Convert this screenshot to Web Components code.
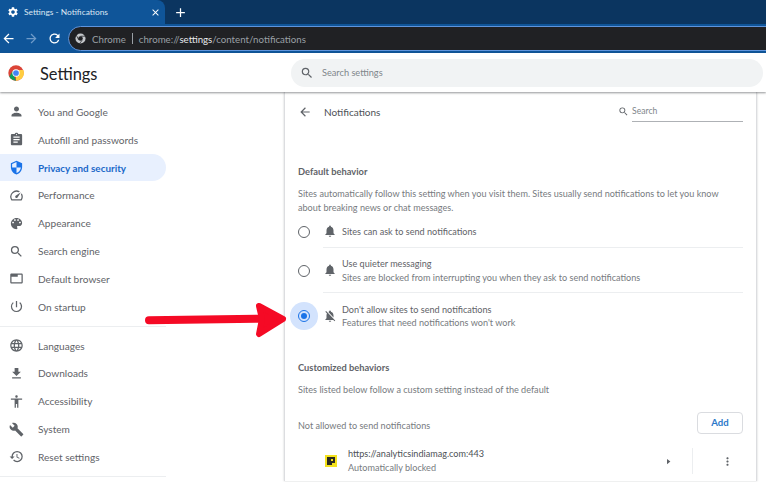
<!DOCTYPE html>
<html>
<head>
<meta charset="utf-8">
<title>Settings - Notifications</title>
<style>
  html, body { margin: 0; padding: 0; background: #fff; }
  body { width: 766px; height: 482px; overflow: hidden; position: relative; font-family: Lato, "Noto Sans", sans-serif; }
  .page { display: flex; height: 389px; }
</style>
</head>
<body>
<tab-strip></tab-strip>
<tool-bar></tool-bar>
<settings-header></settings-header>
<div class="page">
  <settings-nav>
    <nav-item icon="person">You and Google</nav-item>
    <nav-item icon="assignment">Autofill and passwords</nav-item>
    <nav-item icon="security" selected>Privacy and security</nav-item>
    <nav-item icon="speed">Performance</nav-item>
    <nav-item icon="palette">Appearance</nav-item>
    <nav-item icon="search">Search engine</nav-item>
    <nav-item icon="browser">Default browser</nav-item>
    <nav-item icon="power">On startup</nav-item>
    <nav-rule></nav-rule>
    <nav-item icon="language">Languages</nav-item>
    <nav-item icon="download">Downloads</nav-item>
    <nav-item icon="accessibility">Accessibility</nav-item>
    <nav-item icon="build">System</nav-item>
    <nav-item icon="restore">Reset settings</nav-item>
    <nav-rule></nav-rule>
  </settings-nav>
  <settings-panel></settings-panel>
</div>
<red-arrow></red-arrow>

<script>
//icon paths, all on a 24 box
const ICONS = {
  person: "M12 12c2.21 0 4-1.79 4-4s-1.79-4-4-4-4 1.79-4 4 1.79 4 4 4zm0 2c-2.67 0-8 1.34-8 4v2h16v-2c0-2.66-5.33-4-8-4z",
  assignment: "M19 3h-4.18C14.4 1.84 13.3 1 12 1c-1.3 0-2.4.84-2.82 2H5c-1.1 0-2 .9-2 2v14c0 1.1.9 2 2 2h14c1.1 0 2-.9 2-2V5c0-1.1-.9-2-2-2zm-7 0c.55 0 1 .45 1 1s-.45 1-1 1-1-.45-1-1 .45-1 1-1zm2 14H7v-2h7v2zm3-4H7v-2h10v2zm0-4H7V7h10v2z",
  security: "M12 1L3 5v6c0 5.55 3.84 10.74 9 12 5.16-1.26 9-6.45 9-12V5l-9-4zm0 10.99h7c-.53 4.12-3.28 7.79-7 8.94V12H5V6.3l7-3.11v8.8z",
  speed: "M20.38 8.57l-1.23 1.85a8 8 0 0 1-.22 7.58H5.07A8 8 0 0 1 15.58 6.85l1.85-1.23A10 10 0 0 0 3.35 19a2 2 0 0 0 1.72 1h13.85a2 2 0 0 0 1.74-1 10 10 0 0 0-.27-10.44zm-9.79 6.84a2 2 0 0 0 2.83 0l5.66-8.49-8.49 5.66a2 2 0 0 0 0 2.83z",
  palette: "M12 3c-4.97 0-9 4.03-9 9s4.03 9 9 9c.83 0 1.5-.67 1.5-1.5 0-.39-.15-.74-.39-1.01-.23-.26-.38-.61-.38-.99 0-.83.67-1.5 1.5-1.5H16c2.76 0 5-2.24 5-5 0-4.42-4.03-8-9-8zm-5.5 9c-.83 0-1.5-.67-1.5-1.5S5.67 9 6.5 9 8 9.67 8 10.5 7.33 12 6.5 12zm3-4C8.67 8 8 7.33 8 6.5S8.67 5 9.5 5s1.5.67 1.5 1.5S10.33 8 9.5 8zm5 0c-.83 0-1.5-.67-1.5-1.5S13.67 5 14.5 5s1.5.67 1.5 1.5S15.33 8 14.5 8zm3 4c-.83 0-1.5-.67-1.5-1.5S16.67 9 17.5 9s1.5.67 1.5 1.5-.67 1.5-1.5 1.5z",
  search: "M15.5 14h-.79l-.28-.27A6.471 6.471 0 0 0 16 9.5 6.5 6.5 0 1 0 9.5 16c1.61 0 3.09-.59 4.23-1.57l.27.28v.79l5 4.99L20.49 19l-4.99-5zm-6 0C7.01 14 5 11.99 5 9.5S7.01 5 9.5 5 14 7.01 14 9.5 11.99 14 9.5 14z",
  browser: "M20 4H4c-1.11 0-2 .9-2 2v12c0 1.1.89 2 2 2h16c1.1 0 2-.9 2-2V6c0-1.1-.89-2-2-2zm0 14H4V9h10V6h6v12z",
  power: "M13 3h-2v10h2V3zm4.83 2.17l-1.42 1.42A6.92 6.92 0 0 1 19 12c0 3.87-3.13 7-7 7A6.995 6.995 0 0 1 7.58 6.58L6.17 5.17A8.932 8.932 0 0 0 3 12a9 9 0 0 0 18 0c0-2.74-1.23-5.18-3.17-6.83z",
  language: "M11.99 2C6.47 2 2 6.48 2 12s4.47 10 9.99 10C17.52 22 22 17.52 22 12S17.52 2 11.99 2zm6.93 6h-2.95a15.65 15.65 0 0 0-1.38-3.56A8.03 8.03 0 0 1 18.92 8zM12 4.04c.83 1.2 1.48 2.53 1.91 3.96h-3.82c.43-1.43 1.08-2.76 1.91-3.96zM4.26 14C4.1 13.36 4 12.69 4 12s.1-1.36.26-2h3.38c-.08.66-.14 1.32-.14 2 0 .68.06 1.34.14 2H4.26zm.82 2h2.95c.32 1.25.78 2.45 1.38 3.56A7.987 7.987 0 0 1 5.08 16zm2.95-8H5.08a7.987 7.987 0 0 1 4.33-3.56A15.65 15.65 0 0 0 8.03 8zM12 19.96c-.83-1.2-1.48-2.53-1.91-3.96h3.82c-.43 1.43-1.08 2.76-1.91 3.96zM14.34 14H9.66c-.09-.66-.16-1.32-.16-2 0-.68.07-1.35.16-2h4.68c.09.65.16 1.32.16 2 0 .68-.07 1.34-.16 2zm.25 5.56c.6-1.11 1.06-2.31 1.38-3.56h2.95a8.03 8.03 0 0 1-4.33 3.56zM16.36 14c.08-.66.14-1.32.14-2 0-.68-.06-1.34-.14-2h3.38c.16.64.26 1.31.26 2s-.1 1.36-.26 2h-3.38z",
  download: "M19 9h-4V3H9v6H5l7 7 7-7zM5 18v2h14v-2H5z",
  accessibility: "M12 2c1.1 0 2 .9 2 2s-.9 2-2 2-2-.9-2-2 .9-2 2-2zm9 7h-6v13h-2v-6h-2v6H9V9H3V7h18v2z",
  build: "M22.7 19l-9.1-9.1c.9-2.3.4-5-1.5-6.9-2-2-5-2.4-7.4-1.3L9 6 6 9 1.6 4.7C.4 7.1.9 10.1 2.9 12.1c1.9 1.9 4.6 2.4 6.9 1.5l9.1 9.1c.4.4 1 .4 1.4 0l2.3-2.3c.5-.4.5-1.1.1-1.4z",
  restore: "M13 3a9 9 0 0 0-9 9H1l3.89 3.89.07.14L9 12H6c0-3.87 3.13-7 7-7s7 3.13 7 7-3.13 7-7 7c-1.93 0-3.68-.79-4.94-2.06l-1.42 1.42A8.954 8.954 0 0 0 13 21a9 9 0 0 0 0-18zm-1 5v5l4.28 2.54.72-1.21-3.5-2.08V8H12z",
  bell: "M12 22c1.1 0 2-.9 2-2h-4c0 1.1.89 2 2 2zm6-6v-5c0-3.07-1.64-5.64-4.5-6.32V4c0-.83-.67-1.5-1.5-1.5s-1.5.67-1.5 1.5v.68C7.63 5.36 6 7.92 6 11v5l-2 2v1h16v-1l-2-2z",
  belloff: "M20 18.69L7.84 6.14 5.27 3.49 4 4.76l2.8 2.8v.01c-.52.99-.8 2.16-.8 3.42v5l-2 2v1h13.73l2 2L21 19.72l-1-1.03zM12 22c1.11 0 2-.89 2-2h-4c0 1.11.89 2 2 2zm6-7.32V11c0-3.08-1.64-5.64-4.5-6.32V4c0-.83-.67-1.5-1.5-1.5s-1.5.67-1.5 1.5v.68c-.15.03-.29.08-.42.12-.1.03-.2.07-.3.11h-.01c-.2.08-.4.17-.59.27-.01 0-.01 0-.02.01L18 14.68z",
  gear: "M19.14 12.94c.04-.3.06-.61.06-.94 0-.32-.02-.64-.07-.94l2.03-1.58a.49.49 0 0 0 .12-.61l-1.92-3.32a.488.488 0 0 0-.59-.22l-2.39.96c-.5-.38-1.03-.7-1.62-.94l-.36-2.54a.484.484 0 0 0-.48-.41h-3.84c-.24 0-.43.17-.47.41l-.36 2.54c-.59.24-1.13.57-1.62.94l-2.39-.96c-.22-.08-.47 0-.59.22L2.74 8.87c-.12.21-.08.47.12.61l2.03 1.58c-.05.3-.09.63-.09.94s.02.64.07.94l-2.03 1.58a.49.49 0 0 0-.12.61l1.92 3.32c.12.22.37.29.59.22l2.39-.96c.5.38 1.03.7 1.62.94l.36 2.54c.05.24.24.41.48.41h3.84c.24 0 .44-.17.47-.41l.36-2.54c.59-.24 1.13-.56 1.62-.94l2.39.96c.22.08.47 0 .59-.22l1.92-3.32c.12-.22.07-.47-.12-.61l-2.01-1.58zM12 15.6c-1.98 0-3.6-1.62-3.6-3.6s1.62-3.6 3.6-3.6 3.6 1.62 3.6 3.6-1.62 3.6-3.6 3.6z",
  back: "M20 11H7.83l5.59-5.59L12 4l-8 8 8 8 1.41-1.41L7.83 13H20v-2z",
  forward: "M12 4l-1.41 1.41L16.17 11H4v2h12.17l-5.58 5.59L12 20l8-8z",
  refresh: "M17.65 6.35A7.958 7.958 0 0 0 12 4c-4.42 0-7.99 3.58-7.99 8s3.57 8 7.99 8c3.73 0 6.84-2.55 7.73-6h-2.08A5.99 5.99 0 0 1 12 18c-3.31 0-6-2.69-6-6s2.69-6 6-6c1.66 0 3.14.69 4.22 1.78L13 11h7V4l-2.35 2.35z",
  close: "M19 6.41L17.59 5 12 10.59 6.41 5 5 6.41 10.59 12 5 17.59 6.41 19 12 13.41 17.59 19 19 17.59 13.41 12z",
  plus: "M19 13h-6v6h-2v-6H5v-2h6V5h2v6h6v2z",
  kebab: "M12 8c1.1 0 2-.9 2-2s-.9-2-2-2-2 .9-2 2 .9 2 2 2zm0 2c-1.1 0-2 .9-2 2s.9 2 2 2 2-.9 2-2-.9-2-2-2zm0 6c-1.1 0-2 .9-2 2s.9 2 2 2 2-.9 2-2-.9-2-2-2z",
  play: "M8 5l9 7-9 7z"
};

class MIcon extends HTMLElement {
  constructor() {
    super();
    this.attachShadow({ mode: "open" });
  }
  connectedCallback() {
    const size = this.getAttribute("size") || 16;
    const d = ICONS[this.getAttribute("name")];
    this.shadowRoot.innerHTML = `
      <style>
        :host { display: inline-flex; flex: none; width: ${size}px; height: ${size}px; color: inherit; }
        svg { width: 100%; height: 100%; display: block; fill: currentColor; }
      </style>
      <svg viewBox="0 0 24 24"><path d="${d}"/></svg>`;
  }
}
customElements.define("m-icon", MIcon);

//tabs row
class TabStrip extends HTMLElement {
  constructor() {
    super();
    this.attachShadow({ mode: "open" }).innerHTML = `
      <style>
        :host { display: flex; align-items: stretch; height: 24px; background: #0b3560; color: #fff; font-size: 8.4px; }
        .tab { width: 165px; box-sizing: border-box; background: #0f5599; border-radius: 0 8px 0 0; display: flex; align-items: center; padding: 0 0 0 7px; color: #dbe6f2; }
        .title { margin-left: 5px; flex: 1; }
        .x { margin-right: 4px; color: #fff; }
        .new { margin: 0 0 0 8px; align-self: center; color: #fff; }
      </style>
      <div class="tab">
        <m-icon name="gear" size="12" style="color:#fff"></m-icon>
        <span class="title">Settings - Notifications</span>
        <m-icon class="x" name="close" size="11"></m-icon>
      </div>
      <m-icon class="new" name="plus" size="15"></m-icon>`;
  }
}
customElements.define("tab-strip", TabStrip);

//back/forward/reload and the dark omnibox
class ToolBar extends HTMLElement {
  constructor() {
    super();
    this.attachShadow({ mode: "open" }).innerHTML = `
      <style>
        :host { display: flex; align-items: center; height: 29px; background: #0f5599; color: #fff; box-sizing: border-box; padding-left: 1px; }
        .nav { display: flex; width: 67px; flex: none; gap: 8px; box-sizing: border-box; }
        .off { color: #6f9bc9; }
        .omni { flex: 1; height: 25px; margin-right: -20px; box-sizing: border-box; background: #202124; border: 1.5px solid #5f94dc; border-radius: 13px 0 0 13px; display: flex; align-items: center; padding-left: 6px; font-size: 9.7px; color: #9aa0a6; white-space: nowrap; }
        .chip { margin: 0 6px 0 6px; }
        .sep { width: 1px; height: 11px; background: #9aa0a6; margin-right: 6px; }
        b { font-weight: 400; color: #e8eaed; }
      </style>
      <div class="nav">
        <m-icon name="back" size="15"></m-icon>
        <m-icon class="off" name="forward" size="15"></m-icon>
        <m-icon name="refresh" size="15"></m-icon>
      </div>
      <div class="omni">
        <svg width="11" height="11" viewBox="0 0 24 24"><circle cx="12" cy="12" r="11" fill="#c4c7cb"/><circle cx="12" cy="12" r="5" fill="#202124"/><path d="M12 7h10M8 15L3 5M15.5 16L10 23" stroke="#202124" stroke-width="1.6"/></svg>
        <span class="chip">Chrome</span><span class="sep"></span>
        <span>chrome://<b>settings</b>/content/notifications</span>
      </div>`;
  }
}
customElements.define("tool-bar", ToolBar);

class SettingsHeader extends HTMLElement {
  constructor() {
    super();
    this.attachShadow({ mode: "open" }).innerHTML = `
      <style>
        :host { display: flex; align-items: center; height: 39px; background: #fff; box-shadow: 0 1px 2px rgba(60,64,67,.55); position: relative; z-index: 1; }
        svg { margin-left: 8px; flex: none; }
        h1 { margin: 0 0 0 16px; padding-top: 1px; width: 251px; flex: none; font-size: 16.4px; font-weight: 400; color: #202124; }
        .box { width: 472px; height: 28px; border-radius: 14px; background: #f1f3f4; display: flex; align-items: center; padding-left: 9px; box-sizing: border-box; font-size: 9.2px; color: #80868b; gap: 8px; }
      </style>
      <svg width="16" height="16" viewBox="0 0 48 48">
        <circle cx="24" cy="24" r="23" fill="#db4437"/>
        <path d="M24 47A23 23 0 0 1 4 35.5L14 18z" fill="#0f9d58"/>
        <path d="M24 47A23 23 0 0 0 46 15H24z" fill="#ffcd40"/>
        <circle cx="24" cy="24" r="11" fill="#fff"/>
        <circle cx="24" cy="24" r="8.6" fill="#4285f4"/>
      </svg>
      <h1>Settings</h1>
      <div class="box"><m-icon name="search" size="14" style="color:#5f6368"></m-icon><span>Search settings</span></div>`;
  }
}
customElements.define("settings-header", SettingsHeader);

class SettingsNav extends HTMLElement {
  constructor() {
    super();
    this.attachShadow({ mode: "open" }).innerHTML = `
      <style>
        :host { display: block; width: 284px; flex: none; box-sizing: border-box; padding-top: 6px; }
      </style>
      <slot></slot>`;
  }
}
customElements.define("settings-nav", SettingsNav);

class NavItem extends HTMLElement {
  constructor() {
    super();
    this.attachShadow({ mode: "open" });
  }
  connectedCallback() {
    const on = this.hasAttribute("selected");
    this.shadowRoot.innerHTML = `
      <style>
        :host { display: flex; align-items: center; width: 166px; height: 27.84px; box-sizing: border-box; padding-left: 9px; font-size: ${on ? 9.9 : 10.1}px; color: ${on ? "#1a68c9" : "#5f6368"}; border-radius: 0 14px 14px 0; background: ${on ? "#e8f0fe" : "transparent"}; font-weight: ${on ? 700 : 400}; }
        m-icon { margin-right: 14px; color: ${on ? "#1a73e8" : "#5f6368"}; }
      </style>
      <m-icon name="${this.getAttribute("icon")}" size="15"></m-icon><slot></slot>`;
  }
}
customElements.define("nav-item", NavItem);

class NavRule extends HTMLElement {
  constructor() {
    super();
    this.attachShadow({ mode: "open" }).innerHTML = `
      <style>
        :host { display: block; width: 166px; height: 1px; margin: 5px 0 5px; background: #eceef0; }
      </style>`;
  }
}
customElements.define("nav-rule", NavRule);

//radio with a bell and one or two lines
class RadioRow extends HTMLElement {
  constructor() {
    super();
    this.attachShadow({ mode: "open" });
  }
  connectedCallback() {
    const on = this.hasAttribute("checked");
    const sub = this.getAttribute("sub");
    this.shadowRoot.innerHTML = `
      <style>
        :host { display: flex; align-items: center; height: ${this.getAttribute("h") || 45}px; font-size: 9.1px; color: #5f6368; }
        .radio { width: 38px; flex: none; display: flex; box-sizing: border-box; }
        .dot { width: 12px; height: 12px; box-sizing: border-box; border-radius: 50%; border: 1.4px solid ${on ? "#1a73e8" : "#5f6368"}; display: flex; align-items: center; justify-content: center; box-shadow: ${on ? "0 0 0 8px #d3e3fd" : "none"}; background: ${on ? "#d3e3fd" : "#fff"}; }
        .dot i { width: 6px; height: 6px; border-radius: 50%; background: #1a73e8; display: ${on ? "block" : "none"}; }
        .body { flex: 1; align-self: stretch; display: flex; align-items: center; margin-left: -13px; box-sizing: border-box; border-bottom: ${this.hasAttribute("last") ? "0" : "1px solid #eceef0"}; }
        m-icon { margin: 0 5px 0 0; }
        .t { line-height: 13.5px; padding-top: 1px; }
        .s { display: ${sub ? "block" : "none"}; color: #777b80; }
      </style>
      <div class="radio"><div class="dot"><i></i></div></div>
      <div class="body">
        <m-icon name="${on ? "belloff" : "bell"}" size="14"></m-icon>
        <div class="t"><div>${this.getAttribute("label")}</div><div class="s">${sub || ""}</div></div>
      </div>`;
  }
}
customElements.define("radio-row", RadioRow);

class SiteRow extends HTMLElement {
  constructor() {
    super();
    this.attachShadow({ mode: "open" }).innerHTML = `
      <style>
        :host { display: flex; align-items: center; height: 28px; font-size: 9.1px; color: #5f6368; }
        .fav { width: 12px; height: 12px; margin-left: 27px; background: #f4e21c; display: flex; align-items: center; justify-content: center; flex: none; }
        .t { margin-left: 11px; line-height: 14px; flex: 1; }
        .t div + div { color: #777b80; }
        .play { margin-right: 19px; color: #5f6368; }
        .sep { width: 1px; height: 26px; background: #eceef0; }
        .more { margin: 0 9px 0 28px; color: #5f6368; }
      </style>
      <div class="fav"><svg width="8" height="8" viewBox="0 0 8 8"><path d="M0 0h8v6H5v2H0z" fill="#2b2a20"/><path d="M4 2h2v2H4z" fill="#f4e21c"/></svg></div>
      <div class="t"><div style="color:#4d5156">https://analyticsindiamag.com:443</div><div>Automatically blocked</div></div>
      <m-icon class="play" name="play" size="9"></m-icon>
      <span class="sep"></span>
      <m-icon class="more" name="kebab" size="13"></m-icon>`;
  }
}
customElements.define("site-row", SiteRow);

class SettingsPanel extends HTMLElement {
  constructor() {
    super();
    this.attachShadow({ mode: "open" }).innerHTML = `
      <style>
        :host { display: block; width: 473px; flex: none; box-sizing: border-box; background: #fff; border-left: 1px solid #dcdde0; border-right: 1px solid #dcdde0; box-shadow: 0 0 2px rgba(60,64,67,.25); padding: 0 13px 0 13px; font-size: 9.1px; color: #5f6368; overflow: hidden; }
        .top { display: flex; align-items: center; height: 39px; }
        .top .name { margin-left: 12px; flex: 1; color: #4d5156; font-size: 10px; }
        .find { display: flex; align-items: center; gap: 3px; }
        .find span { display: block; width: 111px; border-bottom: 1px solid #aeb1b5; height: 19px; line-height: 18px; font-size: 8.6px; color: #80868b; }
        h2 { margin: 0; font-size: 9.3px; font-weight: 700; color: #5f6368; line-height: 14px; }
        p { margin: 0; line-height: 14px; color: #777b80; }
        .add { display: flex; align-items: center; justify-content: space-between; height: 23px; margin-top: 14px; }
        button { font: inherit; font-size: 9.6px; font-weight: 700; width: 46px; height: 22px; padding: 0; background: #fff; color: #2b78c9; border: 1px solid #dadce0; border-radius: 4px; }
      </style>
      <div class="top">
        <m-icon name="back" size="14"></m-icon>
        <span class="name">Notifications</span>
        <div class="find"><m-icon name="search" size="11"></m-icon><span>Search</span></div>
      </div>
      <h2 style="margin-top:34px">Default behavior</h2>
      <p style="margin-top:8px">Sites automatically follow this setting when you visit them. Sites usually send notifications to let you know about breaking news or chat messages.</p>
      <radio-row h="33" label="Sites can ask to send notifications"></radio-row>
      <radio-row h="45" label="Use quieter messaging" sub="Sites are blocked from interrupting you when they ask to send notifications"></radio-row>
      <radio-row h="45" last checked label="Don't allow sites to send notifications" sub="Features that need notifications won't work"></radio-row>
      <h2 style="margin-top:23px">Customized behaviors</h2>
      <p style="margin-top:8px">Sites listed below follow a custom setting instead of the default</p>
      <div class="add"><span style="color:#777b80;margin-top:5px">Not allowed to send notifications</span><button>Add</button></div>
      <site-row style="margin-top:13px"></site-row>`;
  }
}
customElements.define("settings-panel", SettingsPanel);

//the annotation drawn over the shot
class RedArrow extends HTMLElement {
  constructor() {
    super();
    this.attachShadow({ mode: "open" }).innerHTML = `
      <style>
        :host { position: absolute; left: 140px; top: 298px; width: 150px; height: 44px; z-index: 3; }
        svg { display: block; }
      </style>
      <svg width="150" height="44" viewBox="0 0 150 44">
        <path d="M9 22.3L122 20.7" stroke="#f50a25" stroke-width="8" stroke-linecap="round" fill="none"/>
        <path d="M119 8L143 21L119 36L122 21z" fill="#f50a25" stroke="#f50a25" stroke-width="6" stroke-linejoin="round"/>
      </svg>`;
  }
}
customElements.define("red-arrow", RedArrow);
</script>
</body>
</html>
